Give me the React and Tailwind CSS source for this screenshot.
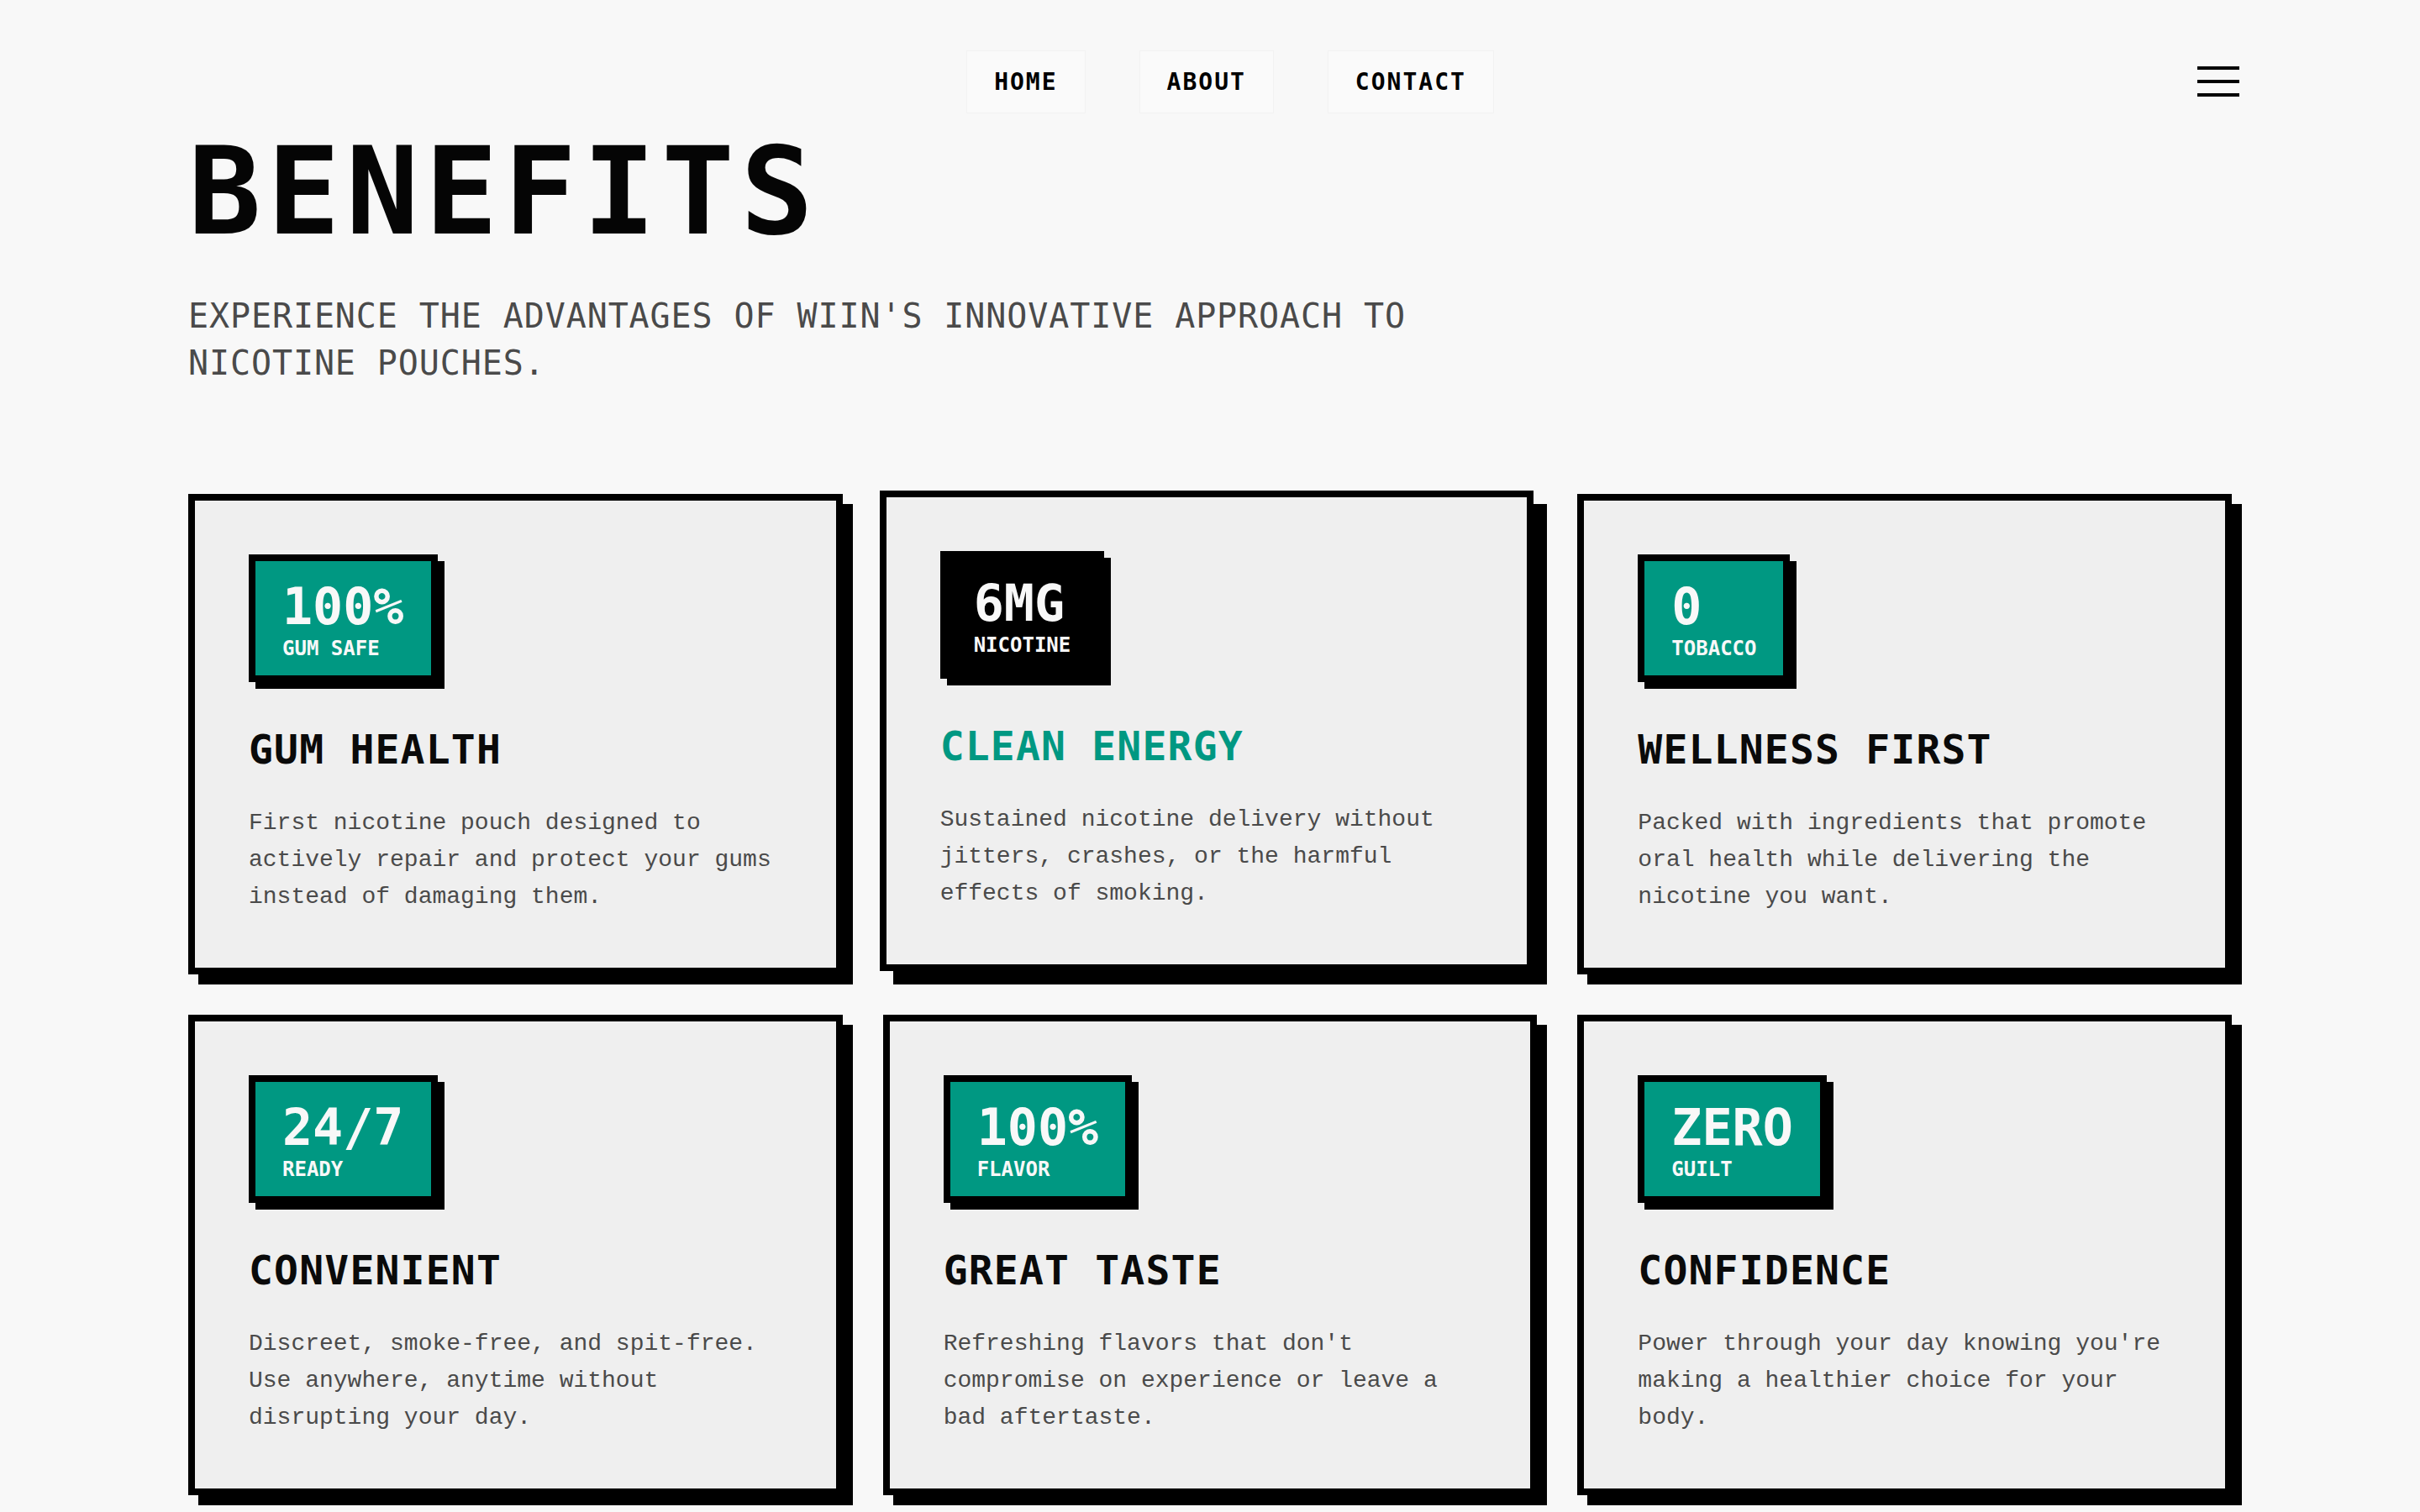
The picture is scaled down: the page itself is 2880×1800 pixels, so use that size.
import React from 'react';

const benefits = [
  {
    stat: '100%',
    label: 'GUM SAFE',
    title: 'GUM HEALTH',
    text: 'First nicotine pouch designed to actively repair and protect your gums instead of damaging them.',
  },
  {
    stat: '6MG',
    label: 'NICOTINE',
    title: 'CLEAN ENERGY',
    text: 'Sustained nicotine delivery without jitters, crashes, or the harmful effects of smoking.',
    active: true,
  },
  {
    stat: '0',
    label: 'TOBACCO',
    title: 'WELLNESS FIRST',
    text: 'Packed with ingredients that promote oral health while delivering the nicotine you want.',
  },
  {
    stat: '24/7',
    label: 'READY',
    title: 'CONVENIENT',
    text: 'Discreet, smoke-free, and spit-free. Use anywhere, anytime without disrupting your day.',
  },
  {
    stat: '100%',
    label: 'FLAVOR',
    title: 'GREAT TASTE',
    text: "Refreshing flavors that don't compromise on experience or leave a bad aftertaste.",
  },
  {
    stat: 'ZERO',
    label: 'GUILT',
    title: 'CONFIDENCE',
    text: "Power through your day knowing you're making a healthier choice for your body.",
  },
];

const BenefitCard = ({ item }) => {
  return (
    <div
      className={`bg-[#efefef] border-[8px] border-black px-[64px] pt-[64px] pb-[62px] ${
        item.active
          ? '-translate-x-[4px] -translate-y-[4px] shadow-[16px_16px_0_#000]'
          : 'shadow-[12px_12px_0_#000]'
      }`}
    >
      <div
        className={`inline-flex flex-col border-[8px] border-black px-[32px] pt-[24px] pb-[20px] text-[#f8f8f8] shadow-[8px_8px_0_#000] ${
          item.active ? 'bg-black' : 'bg-[#009882]'
        }`}
      >
        <span className="text-[60px] leading-none font-bold">{item.stat}</span>
        <span className="mt-[8px] text-[24px] leading-none font-bold">{item.label}</span>
      </div>
      <h3
        className={`mt-[48px] text-[48px] leading-[64px] font-bold tracking-[0.025em] ${
          item.active ? 'text-[#009882]' : 'text-[#0a0a0a]'
        }`}
      >
        {item.title}
      </h3>
      <p className="mt-[34px] font-['Liberation_Mono',monospace] text-[28px] leading-[44px] text-[#4a4a4a]">
        {item.text}
      </p>
    </div>
  );
};

export default function App() {
  return (
    <div className="min-h-screen bg-[#f8f8f8] font-['DejaVu_Sans_Mono',monospace] text-[#0a0a0a]">
      <header className="flex items-center px-[215px] pt-[60px] pb-[21px]">
        <div className="flex-1" />
        <nav className="ml-[48px] flex items-center gap-[64px]">
          {['HOME', 'ABOUT', 'CONTACT'].map((link) => (
            <a
              key={link}
              href="#"
              className="flex h-[75px] items-center border border-[#f2f2f2] bg-[#fafafa] px-[32px] text-[28px] font-bold tracking-[2px] text-black"
            >
              {link}
            </a>
          ))}
        </nav>
        <div className="flex flex-1 justify-end">
          <button className="-mt-[2px] flex w-[50px] flex-col gap-[12px]" aria-label="Menu">
            <span className="h-[4px] w-full bg-black" />
            <span className="h-[4px] w-full bg-black" />
            <span className="h-[4px] w-full bg-black" />
          </button>
        </div>
      </header>

      <main className="mx-auto max-w-[2560px] px-[64px] pb-[120px]">
        <h1 className="text-[144px] leading-none font-bold tracking-[0.05em] text-[#050505]">BENEFITS</h1>
        <p className="mt-[48px] max-w-[1536px] text-[40px] leading-[56px] tracking-[0.9px] text-[#4a4a4a]">
          EXPERIENCE THE ADVANTAGES OF WIIN'S INNOVATIVE APPROACH TO NICOTINE POUCHES.
        </p>

        <div className="mt-[128px] grid grid-cols-3 gap-[48px]">
          {benefits.map((item) => (
            <BenefitCard key={item.title} item={item} />
          ))}
        </div>
      </main>
    </div>
  );
}
